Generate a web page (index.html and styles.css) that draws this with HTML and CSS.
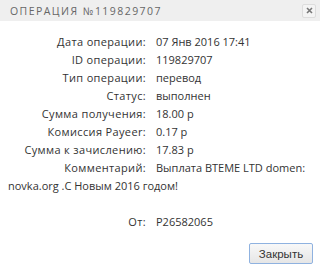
FILE: index.html
```html
<!DOCTYPE html>
<html lang="ru">
<head>
<meta charset="utf-8">
<link rel="stylesheet" href="styles.css">
</head>
<body>
<div class="dialog">
  <div class="titlebar">
    <span class="title">Операция №119829707</span>
    <button class="close" type="button" aria-label="close">
      <svg width="7" height="7" viewBox="0 0 7 7"><path d="M1 1L6 6M6 1L1 6" stroke="#777" stroke-width="1.6"/></svg>
    </button>
  </div>
  <div class="content">
    <div class="row"><span class="label">Дата операции:</span><span class="value">07 Янв 2016 17:41</span></div>
    <div class="row"><span class="label">ID операции:</span><span class="value">119829707</span></div>
    <div class="row"><span class="label">Тип операции:</span><span class="value">перевод</span></div>
    <div class="row"><span class="label">Статус:</span><span class="value">выполнен</span></div>
    <div class="row"><span class="label">Сумма получения:</span><span class="value">18.00 р</span></div>
    <div class="row"><span class="label">Комиссия Payeer:</span><span class="value">0.17 р</span></div>
    <div class="row"><span class="label">Сумма к зачислению:</span><span class="value">17.83 р</span></div>
    <div class="row"><span class="label">Комментарий:</span><span class="value">Выплата BTEME LTD domen: novka.org .C Новым 2016 годом!</span></div>
    <div class="row spacer"></div>
    <div class="row"><span class="label">От:</span><span class="value">P26582065</span></div>
  </div>
  <div class="actions">
    <button class="btn" type="button">Закрыть</button>
  </div>
</div>
</body>
</html>
```
FILE: styles.css
```css
html, body {
  margin: 0;
  padding: 0;
  background: #fff;
}
.dialog {
  width: 320px;
  height: 273px;
  font-family: "Open Sans", "Noto Sans", sans-serif;
  color: #333;
}
.titlebar {
  height: 21px;
  background: #efefef;
  display: flex;
  align-items: center;
  justify-content: space-between;
  padding: 0 4px 0 10px;
}
.title {
  text-transform: uppercase;
  font-size: 10.5px;
  letter-spacing: 1.45px;
  color: #666;
}
.close {
  width: 14px;
  height: 14px;
  padding: 0;
  border: 1px solid #ddd;
  border-radius: 2px;
  background: #f4f4f4;
  display: flex;
  align-items: center;
  justify-content: center;
}
.content {
  padding: 12px 8px 0 8px;
  font-size: 11px;
  line-height: 18px;
}
.row {
  min-height: 18px;
}
.label {
  display: inline-block;
  width: 138px;
  text-align: right;
  margin-right: 10px;
  letter-spacing: 0.35px;
}
.actions {
  display: flex;
  justify-content: flex-end;
  padding: 12px 7px 0 0;
}
.btn {
  width: 64px;
  height: 21px;
  font-family: "Liberation Sans", Arial, sans-serif;
  font-size: 11.5px;
  color: #333;
  border: 1px solid #8fb2e0;
  border-radius: 2px;
  background: linear-gradient(#f8f8f8, #e6e6e6);
  padding: 0;
}
```
